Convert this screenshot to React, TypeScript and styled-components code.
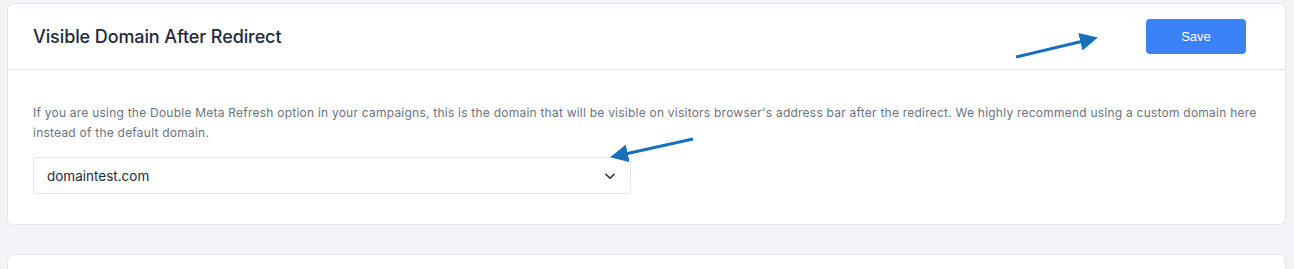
import React from 'react'
import styled, { createGlobalStyle } from 'styled-components'

const GlobalStyle = createGlobalStyle`
    html, body {
        margin: 0;
        padding: 0;
        background: #f3f4f8;
        font-family: "Inter", "Roboto", sans-serif;
    }
`

const App = () => {
    return (
        <Page>
            <GlobalStyle />
            <Card>
                <Header>
                    <Title>Visible Domain After Redirect</Title>
                    <SaveButton type="button">Save</SaveButton>
                </Header>
                <Body>
                    <Hint>
                        If you are using the Double Meta Refresh option in your campaigns, this is the domain that will be visible on visitors browser's address bar after the redirect. We highly recommend using a custom domain here instead of the default domain.
                    </Hint>
                    <Select>
                        <span>domaintest.com</span>
                        <svg width="14" height="14" viewBox="0 0 24 24" fill="none" stroke="#1f2937" strokeWidth="2.6" strokeLinecap="round" strokeLinejoin="round">
                            <path d="M5 9l7 7 7-7" />
                        </svg>
                    </Select>
                </Body>
            </Card>
            <Card />
            <Annotations width="1294" height="269" viewBox="0 0 1294 269">
                <defs>
                    <marker id="head" markerWidth="6" markerHeight="6" refX="4" refY="3" orient="auto" markerUnits="strokeWidth">
                        <path d="M0,0 L6,3 L0,6 z" fill="#1671b9" />
                    </marker>
                </defs>
                <line x1="1016" y1="57" x2="1092" y2="39" stroke="#1671b9" strokeWidth="3" markerEnd="url(#head)" />
                <line x1="693" y1="139" x2="616" y2="156" stroke="#1671b9" strokeWidth="3" markerEnd="url(#head)" />
            </Annotations>
        </Page>
    )
}

const Page = styled.div`
    position: relative;
    padding: 3px 8px 0 7px;
    display: flex;
    flex-direction: column;
    gap: 29px;
    height: 269px;
    box-sizing: border-box;
    overflow: hidden;
`

const Card = styled.div`
    background: #fff;
    border: 1px solid #e3e5ea;
    border-radius: 6px;
    flex-shrink: 0;
    min-height: 40px;
`

const Header = styled.div`
    display: flex;
    align-items: center;
    justify-content: space-between;
    height: 65px;
    padding: 0 39px 0 25px;
    border-bottom: 1px solid #e3e5ea;
`

const Title = styled.h2`
    margin: 0;
    font-size: 18px;
    font-weight: 500;
    color: #1e2a3b;
    letter-spacing: -0.1px;
`

const SaveButton = styled.button`
    width: 100px;
    height: 35px;
    background: #3b82f6;
    color: #fff;
    border: none;
    border-radius: 4px;
    font-family: "Liberation Sans", Arial, sans-serif;
    font-size: 13px;
    cursor: pointer;
`

const Body = styled.div`
    padding: 33px 12px 30px 25px;
`

const Hint = styled.p`
    margin: 0 0 14px 0;
    font-family: "Inter", sans-serif;
    font-size: 12px;
    letter-spacing: 0.23px;
    line-height: 20px;
    color: #6b7280;
`

const Select = styled.div`
    display: flex;
    align-items: center;
    justify-content: space-between;
    width: 598px;
    height: 37px;
    box-sizing: border-box;
    padding: 0 13px;
    border: 1px solid #e3e5ea;
    border-radius: 4px;
    font-size: 13.5px;
    color: #1e2a3b;
`

const Annotations = styled.svg`
    position: absolute;
    left: 0;
    top: 0;
    pointer-events: none;
`

export default App
